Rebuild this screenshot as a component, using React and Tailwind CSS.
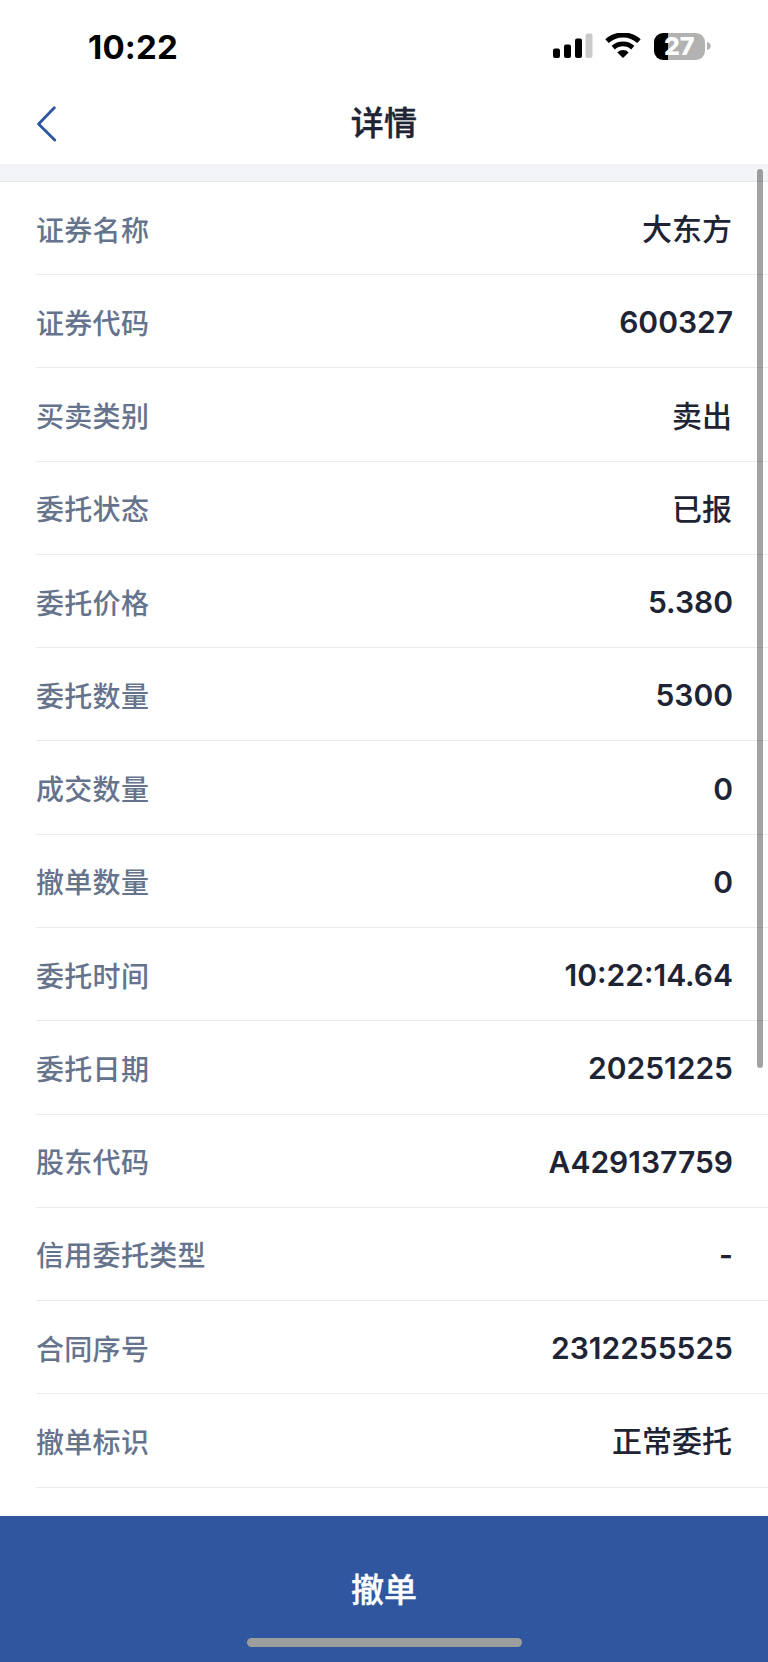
const rows = [
  ['证券名称', '大东方', true],
  ['证券代码', '600327'],
  ['买卖类别', '卖出', true],
  ['委托状态', '已报', true],
  ['委托价格', '5.380'],
  ['委托数量', '5300'],
  ['成交数量', '0'],
  ['撤单数量', '0'],
  ['委托时间', '10:22:14.64'],
  ['委托日期', '20251225'],
  ['股东代码', 'A429137759'],
  ['信用委托类型', '-'],
  ['合同序号', '2312255525'],
  ['撤单标识', '正常委托', true],
];

function StatusBar() {
  return (
    <div className="flex h-[92px] shrink-0 items-center justify-between pl-[88px] pr-[58px]">
      <span className="pt-[2px] text-[33px] leading-none font-bold tracking-[0.15px] text-black">10:22</span>
      <div className="flex items-center">
        <svg width="40" height="26" viewBox="0 0 40 26">
          <rect x="0" y="15.5" width="7" height="9.5" rx="2" />
          <rect x="11" y="11.5" width="7" height="13.5" rx="2" />
          <rect x="22" y="5.5" width="7" height="19.5" rx="2" />
          <rect x="32.5" y="0.5" width="7" height="24.5" rx="2" fill="#cbcbcb" />
        </svg>
        <svg className="ml-[12.5px]" width="36" height="26" viewBox="0 0 36 26">
          <path d="M2 8.2A23.5 23.5 0 0 1 34 8.2" fill="none" stroke="#000" strokeWidth="5" />
          <path d="M8.2 14.6A14.6 14.6 0 0 1 27.8 14.6" fill="none" stroke="#000" strokeWidth="4.8" />
          <path d="M18 25L12.3 19.4A8.2 8.2 0 0 1 23.7 19.4Z" />
        </svg>
        <div className="ml-[12.5px] flex items-center">
          <div className="flex h-[27px] w-[51.5px] items-center justify-center rounded-[9px] bg-linear-to-r from-black from-[28%] to-[#b2b2b2] to-[28%]">
            <span className="text-[25px] leading-none font-extrabold text-white">27</span>
          </div>
          <svg className="-mr-[1px] ml-[2px]" width="4" height="8" viewBox="0 0 4 8">
            <path d="M0 0C5 1 5 7 0 8Z" fill="#b2b2b2" />
          </svg>
        </div>
      </div>
    </div>
  );
}

export default function App() {
  return (
    <main className="relative flex h-[1662px] w-[768px] flex-col overflow-hidden bg-white font-['Inter','Noto_Sans_CJK_SC',sans-serif]">
      <StatusBar />
      <header className="grid h-[71.5px] shrink-0 grid-cols-3 items-center px-[36px] pb-[8px]">
        <button aria-label="返回">
          <svg width="22" height="36" viewBox="0 0 22 36" fill="none" stroke="#2f579f" strokeWidth="2.9" strokeLinecap="round" strokeLinejoin="round">
            <path d="M18.3 1.7L2.6 18L18.7 34" />
          </svg>
        </button>
        <h1 className="text-center text-[33px] leading-none font-medium tracking-[0.3px] text-[#1e2433] [-webkit-text-stroke:0.4px]">详情</h1>
      </header>
      <div className="h-[18.4px] shrink-0 border-b border-[#e5e7ea] bg-[#f3f4f7]" />
      <dl className="min-h-0 flex-1 overflow-hidden">
        {rows.map(([label, value, chinese]) => (
          <div key={label} className="ml-[36px] flex h-[93.28px] items-center justify-between border-b border-[#ebecee] pr-[36px]">
            <dt className="pt-[5px] text-[28px] leading-none font-medium tracking-[0.3px] text-[#66738d]">{label}</dt>
            <dd className={chinese ? 'pt-[2px] text-[30px] leading-none font-medium text-[#1e2433]' : '-mr-[1px] pt-[2px] text-[30px] leading-none font-semibold text-[#1e2433]'}>{value}</dd>
          </div>
        ))}
      </dl>
      <button className="flex h-[146.5px] shrink-0 flex-col items-center bg-[#2f569f] pt-[58px] text-[33px] leading-none font-medium text-white [-webkit-text-stroke:0.4px]">
        撤单
        <span className="mt-[31px] h-[9px] w-[275px] rounded-full bg-[#9d9d9d]" />
      </button>
      <div className="absolute top-[169px] left-[757px] h-[899px] w-[5.5px] rounded-full bg-black/36" />
    </main>
  );
}
